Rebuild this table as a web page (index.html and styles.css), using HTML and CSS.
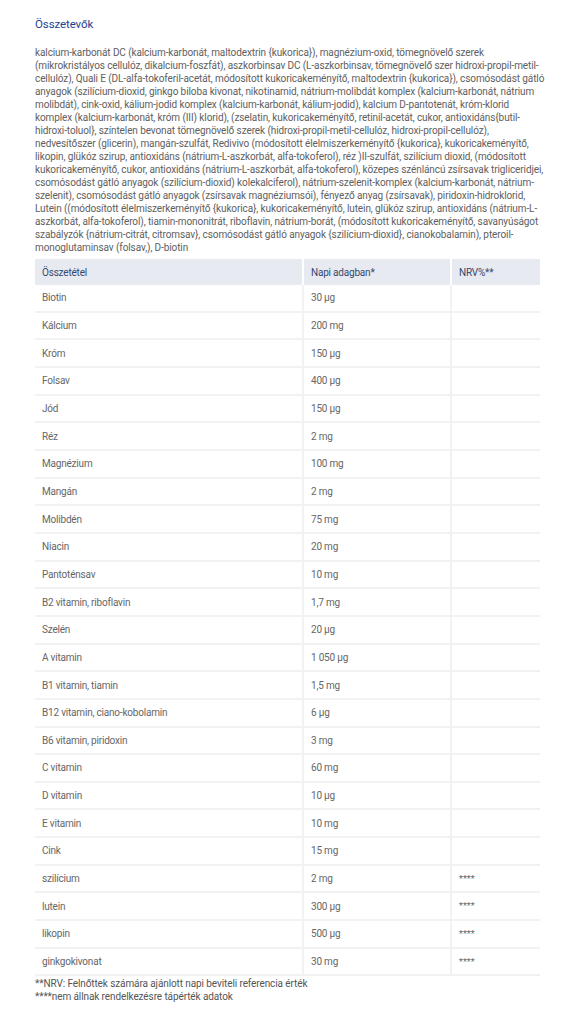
FILE: index.html
```html
<!DOCTYPE html>
<html lang="hu">
<head>
<meta charset="utf-8">
<title>Összetevők</title>
<link rel="stylesheet" href="styles.css">
</head>
<body>
<main class="page">
  <h2 class="title">Összetevők</h2>
  <p class="ingredients">kalcium-karbonát DC (kalcium-karbonát, maltodextrin {kukorica}), magnézium-oxid, tömegnövelő szerek<br>
(mikrokristályos cellulóz, dikalcium-foszfát), aszkorbinsav DC (L-aszkorbinsav, tömegnövelő szer hidroxi-propil-metil-<br>cellulóz), Quali E (DL-alfa-tokoferil-acetát, módosított kukoricakeményítő, maltodextrin {kukorica}), csomósodást gátló<br>
anyagok (szilícium-dioxid, ginkgo biloba kivonat, nikotinamid, nátrium-molibdát komplex (kalcium-karbonát, nátrium<br>
molibdát), cink-oxid, kálium-jodid komplex (kalcium-karbonát, kálium-jodid), kalcium D-pantotenát, króm-klorid<br>
komplex (kalcium-karbonát, króm (III) klorid), (zselatin, kukoricakeményítő, retinil-acetát, cukor, antioxidáns{butil-<br>hidroxi-toluol}, színtelen bevonat tömegnövelő szerek (hidroxi-propil-metil-cellulóz, hidroxi-propil-cellulóz),<br>
nedvesítőszer (glicerin), mangán-szulfát, Redivivo (módosított élelmiszerkeményítő {kukorica}, kukoricakeményítő,<br>
likopin, glükóz szirup, antioxidáns (nátrium-L-aszkorbát, alfa-tokoferol), réz )II-szulfát, szilícium dioxid, (módosított<br>
kukoricakeményítő, cukor, antioxidáns (nátrium-L-aszkorbát, alfa-tokoferol), közepes szénláncú zsírsavak trigliceridjei,<br>
csomósodást gátló anyagok (szilícium-dioxid) kolekalciferol), nátrium-szelenit-komplex (kalcium-karbonát, nátrium-<br>szelenit), csomósodást gátló anyagok (zsírsavak magnéziumsói), fényező anyag (zsírsavak), piridoxin-hidroklorid,<br>
Lutein ((módosított élelmiszerkeményítő {kukorica}, kukoricakeményítő, lutein, glükóz szirup, antioxidáns (nátrium-L-<br>aszkorbát, alfa-tokoferol), tiamin-mononitrát, riboflavin, nátrium-borát, (módosított kukoricakeményítő, savanyúságot<br>
szabályzók {nátrium-citrát, citromsav}, csomósodást gátló anyagok {szilícium-dioxid}, cianokobalamin), pteroil-<br>monoglutaminsav (folsav,), D-biotin</p>
  <table class="nutrition">
    <colgroup>
      <col class="col-name">
      <col class="col-amount">
      <col class="col-nrv">
    </colgroup>
    <thead>
      <tr><th>Összetétel</th><th>Napi adagban*</th><th>NRV%**</th></tr>
    </thead>
    <tbody>
      <tr><td>Biotin</td><td>30 µg</td><td></td></tr>
      <tr><td>Kálcium</td><td>200 mg</td><td></td></tr>
      <tr><td>Króm</td><td>150 µg</td><td></td></tr>
      <tr><td>Folsav</td><td>400 µg</td><td></td></tr>
      <tr><td>Jód</td><td>150 µg</td><td></td></tr>
      <tr><td>Réz</td><td>2 mg</td><td></td></tr>
      <tr><td>Magnézium</td><td>100 mg</td><td></td></tr>
      <tr><td>Mangán</td><td>2 mg</td><td></td></tr>
      <tr><td>Molibdén</td><td>75 mg</td><td></td></tr>
      <tr><td>Niacin</td><td>20 mg</td><td></td></tr>
      <tr><td>Pantoténsav</td><td>10 mg</td><td></td></tr>
      <tr><td>B2 vitamin, riboflavin</td><td>1,7 mg</td><td></td></tr>
      <tr><td>Szelén</td><td>20 µg</td><td></td></tr>
      <tr><td>A vitamin</td><td>1 050 µg</td><td></td></tr>
      <tr><td>B1 vitamin, tiamin</td><td>1,5 mg</td><td></td></tr>
      <tr><td>B12 vitamin, ciano-kobolamin</td><td>6 µg</td><td></td></tr>
      <tr><td>B6 vitamin, piridoxin</td><td>3 mg</td><td></td></tr>
      <tr><td>C vitamin</td><td>60 mg</td><td></td></tr>
      <tr><td>D vitamin</td><td>10 µg</td><td></td></tr>
      <tr><td>E vitamin</td><td>10 mg</td><td></td></tr>
      <tr><td>Cink</td><td>15 mg</td><td></td></tr>
      <tr><td>szilícium</td><td>2 mg</td><td class="star">****</td></tr>
      <tr><td>lutein</td><td>300 µg</td><td class="star">****</td></tr>
      <tr><td>likopin</td><td>500 µg</td><td class="star">****</td></tr>
      <tr><td>ginkgokivonat</td><td>30 mg</td><td class="star">****</td></tr>
    </tbody>
  </table>
  <p class="notes">**NRV: Felnőttek számára ajánlott napi beviteli referencia érték<br>****nem állnak rendelkezésre tápérték adatok</p>
</main>
</body>
</html>
```
FILE: styles.css
```css
html, body {
  margin: 0;
  padding: 0;
  background: #ffffff;
}

body {
  font-family: Roboto, "Liberation Sans", sans-serif;
  color: #666666;
}

.page {
  width: 505px;
  padding: 17px 0 0 35px;
}

.title {
  margin: 0;
  font-size: 11.5px;
  line-height: 14px;
  font-weight: 400;
  color: #1f4190;
  letter-spacing: -0.1px;
}

.ingredients {
  margin: 14.5px 0 0;
  font-size: 10px;
  line-height: 13px;
  letter-spacing: -0.1px;
  white-space: nowrap;
  color: #606060;
}

.nutrition {
  margin-top: 5.5px;
  width: 505px;
  table-layout: fixed;
  border-collapse: separate;
  border-spacing: 0;
  font-size: 10px;
  letter-spacing: -0.2px;
}

.col-name { width: 267px; }
.col-amount { width: 148px; }
.col-nrv { width: 90px; }

.nutrition th {
  height: 26px;
  padding: 0 7px;
  background: #e7eaf1;
  color: #34496f;
  font-weight: 400;
  text-align: left;
  border-left: 2px solid #ffffff;
}

.nutrition th:first-child {
  border-left: 0;
}

.nutrition td {
  height: 25.67px;
  padding: 0 7px;
  color: #666666;
  border-bottom: 2px solid #f2f2f2;
  border-left: 2px solid #f2f2f2;
}

.nutrition td:first-child {
  border-left: 0;
}

.nutrition td.star {
  font-size: 9px;
  letter-spacing: 0;
}

.notes {
  margin: 0.5px 0 0;
  font-size: 10px;
  line-height: 13px;
  letter-spacing: -0.1px;
  color: #555555;
}
```
